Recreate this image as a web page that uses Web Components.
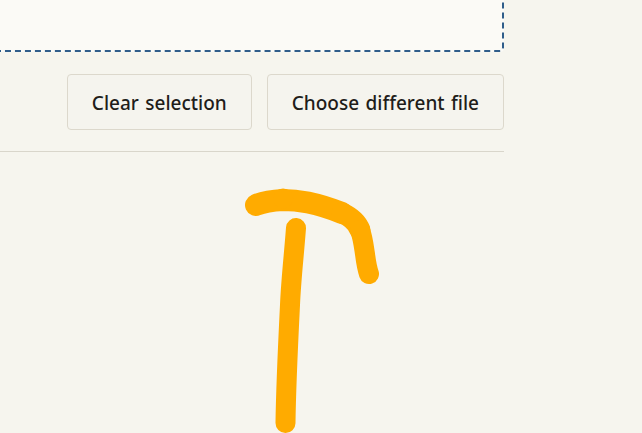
<!DOCTYPE html>
<html>
<head>
<meta charset="utf-8">
<title>Upload</title>
<style>
    html, body { margin: 0; height: 100%; overflow: hidden; background: #f6f5ee; }
</style>
</head>
<body>
<upload-page>
    <drop-zone></drop-zone>
    <action-row>
        <ghost-button>Clear selection</ghost-button>
        <ghost-button>Choose different file</ghost-button>
    </action-row>
    <ink-strokes></ink-strokes>
</upload-page>
<script>
class upload_Page extends HTMLElement {
    constructor() {
        super();
        this.attachShadow({ mode: 'open' });
    }
    connectedCallback(){
        this.shadowRoot.innerHTML = `
            <style>
                :host {
                    display: block;
                    position: relative;
                    width: 642px;
                    height: 433px;
                    overflow: hidden;
                    font-family: "Noto Sans", sans-serif;
                    color: #1f1d1a;
                }
                .column {
                    width: 504px;
                }
            </style>
            <div class="column"><slot></slot></div>
        `;
    }
}

class drop_Zone extends HTMLElement {
    constructor() {
        super();
        this.attachShadow({ mode: 'open' });
    }
    connectedCallback(){
        this.shadowRoot.innerHTML = `
            <style>
                :host {
                    display: block;
                    box-sizing: border-box;
                    height: 92px;
                    margin: -40px 0 0 -40px;
                    background: #fbfaf6;
                    border: 2px dashed #2f5d8a;
                    border-radius: 4px;
                }
            </style>
        `;
    }
}

class action_Row extends HTMLElement {
    constructor() {
        super();
        this.attachShadow({ mode: 'open' });
    }
    connectedCallback(){
        this.shadowRoot.innerHTML = `
            <style>
                :host {
                    display: flex;
                    justify-content: flex-end;
                    gap: 15px;
                    margin-top: 22px;
                    padding-bottom: 21px;
                    border-bottom: 1px solid #d9d6cb;
                }
            </style>
            <slot></slot>
        `;
    }
}

class ghost_Button extends HTMLElement {
    constructor() {
        super();
        this.attachShadow({ mode: 'open' });
    }
    connectedCallback(){
        this.shadowRoot.innerHTML = `
            <style>
                :host {
                    display: inline-flex;
                    align-items: center;
                    justify-content: center;
                    box-sizing: border-box;
                    height: 56px;
                    padding: 1px 24px 0;
                    background: #f5f4ee;
                    border: 1px solid #dcd8cc;
                    border-radius: 4px;
                    font-size: 19px;
                    font-weight: 500;
                    word-spacing: 1.5px;
                    white-space: nowrap;
                }
            </style>
            <slot></slot>
        `;
    }
}

class ink_Strokes extends HTMLElement {
    constructor() {
        super();
        this.attachShadow({ mode: 'open' });
    }
    connectedCallback(){
        this.shadowRoot.innerHTML = `
            <style>
                :host {
                    position: absolute;
                    left: 0;
                    top: 0;
                }
                svg { display: block; }
                path {
                    fill: none;
                    stroke: #ffab00;
                    stroke-width: 20;
                    stroke-linecap: round;
                    stroke-linejoin: round;
                }
                .thick { stroke-width: 22; }
                .mid { stroke-width: 21; }
            </style>
            <svg width="642" height="433" viewBox="0 0 642 433">
                <path class="thick" d="M256 205 C264 201.500 274 200.500 283 200 C292 200 300 201 308 202.500 C320 205 332 209 342 213"/>
                <path class="mid" d="M342 213 C351 217 357 222 360 230"/>
                <path d="M360 230 C363 238 364 248 365 254 C366 262 367 268 369 274"/>
                <path d="M283 198.500 h0.100"/>
                <path d="M296 228 C294 255 291 280 290 305 C288 345 286 385 285.500 423"/>
            </svg>
        `;
    }
}

customElements.define('upload-page', upload_Page);
customElements.define('drop-zone', drop_Zone);
customElements.define('action-row', action_Row);
customElements.define('ghost-button', ghost_Button);
customElements.define('ink-strokes', ink_Strokes);
</script>
</body>
</html>
